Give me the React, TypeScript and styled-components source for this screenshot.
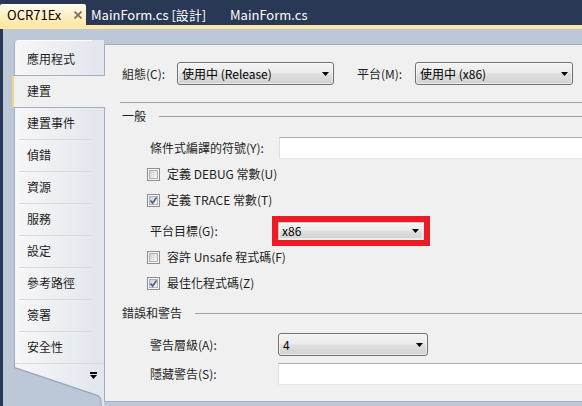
import styled, { createGlobalStyle } from 'styled-components';

const GlobalStyle = createGlobalStyle`
  html, body {
    margin: 0;
    padding: 0;
    width: 582px;
    height: 406px;
    overflow: hidden;
    background: #bcc7d8;
  }
  body {
    font-family: "Noto Sans CJK TC", "Liberation Sans", sans-serif;
    font-size: 12px;
    color: #1e1e1e;
  }
`;

const Window = styled.div`
  width: 582px;
  height: 406px;
  display: flex;
  flex-direction: column;
  overflow: hidden;
`;

const TabStrip = styled.div`
  height: 25px;
  flex-shrink: 0;
  display: flex;
  align-items: flex-end;
  background: #293955;
`;

const DocTab = styled.div<{ $active?: boolean; $w?: number }>`
  height: 21px;
  width: ${(p) => (p.$w ? `${p.$w}px` : 'auto')};
  box-sizing: border-box;
  display: flex;
  align-items: center;
  gap: 13px;
  padding-left: ${(p) => (p.$active ? 7 : 5)}px;
  font-size: 13px;
  line-height: 21px;
  white-space: nowrap;
  color: ${(p) => (p.$active ? '#000' : '#fff')};
  background: ${(p) => (p.$active ? 'linear-gradient(#fffbf0, #ffeec0 60%, #ffe8a6)' : 'transparent')};
  border-radius: 2px 2px 0 0;
`;

const CloseIcon = () => (
  <svg width="8" height="8" viewBox="0 0 8 8">
    <path d="M0.5 0.5 L7.5 7.5 M7.5 0.5 L0.5 7.5" stroke="#716c5e" strokeWidth="1.6" />
  </svg>
);

const YellowBar = styled.div`
  height: 4px;
  flex-shrink: 0;
  background: #ffe8a6;
`;

const Workspace = styled.div`
  flex: 1;
  display: flex;
  border-left: 3px solid #293955;
  padding: 11px 0 0 11px;
  background: #bcc7d8;
`;

const Nav = styled.div`
  width: 90px;
  flex-shrink: 0;
  display: flex;
  flex-direction: column;
  position: relative;
  z-index: 1;
`;

const NavItem = styled.div<{ $selected?: boolean; $first?: boolean; $edge?: 'strong' | 'faint' }>`
  position: relative;
  height: ${(p) => (p.$first ? 35 : 32)}px;
  box-sizing: border-box;
  display: flex;
  align-items: center;
  padding: ${(p) => (p.$first ? '3px 0 0 12px' : '0 0 0 12px')};
  border-left: 1px solid #a3aec0;
  border-radius: ${(p) => (p.$first ? '4px 0 0 0' : '0')};
  background: linear-gradient(90deg, #f7f7f8, #e1e5ec);
  color: #1e1e1e;
  line-height: 16px;

  &::before {
    content: '';
    position: absolute;
    top: 0;
    height: 1px;
    left: ${(p) => (p.$edge === 'strong' ? '-1px' : '4px')};
    right: ${(p) => (p.$edge === 'strong' ? '0' : '12px')};
    background: ${(p) =>
      p.$edge === 'strong' ? '#a3aec0' : p.$first ? '#ffffff' : '#d6dae2'};
  }

  ${(p) =>
    p.$selected &&
    `
    margin-left: -2px;
    margin-right: -1px;
    padding-left: 13px;
    border-left: 2px solid #f2d48c;
    border-radius: 0;
    background: #f0f0f0;
  `}
`;

const NavFooter = styled.div`
  position: relative;
  flex: 1;
  background: #98a5b8;
  clip-path: polygon(0 0, 100% 0, 100% 100%, 87px 100%, 86px 36px, 83px 33px, 0 5px);
`;

const NavFooterFill = styled.div`
  height: 100%;
  display: flex;
  justify-content: flex-end;
  padding: 8px 7px 0 0;
  box-sizing: border-box;
  background: linear-gradient(90deg, #f7f7f8, #e1e5ec);
  clip-path: polygon(1px 0, 100% 0, 100% 100%, 88px 100%, 87px 35px, 84px 32px, 1px 4px);
  border-top: 1px solid #d6dae2;
`;

const MoreIcon = () => (
  <svg width="7" height="7" viewBox="0 0 7 7">
    <rect x="0" y="0" width="7" height="2" fill="#000" />
    <polygon points="0,3 7,3 3.5,7" fill="#000" />
  </svg>
);

const Panel = styled.div`
  flex: 1;
  margin-top: 4px;
  height: 358px;
  box-sizing: border-box;
  border: 1px solid #a3aec0;
  border-right: none;
  background: #f0f0f0;
  padding: 17px 0 0 17px;
  display: flex;
  flex-direction: column;
`;

const Row = styled.div<{ $mt: number; $h: number; $indent?: number }>`
  display: flex;
  align-items: center;
  margin-top: ${(p) => p.$mt}px;
  height: ${(p) => p.$h}px;
  padding-left: ${(p) => p.$indent ?? 0}px;
  flex-shrink: 0;
`;

const Label = styled.span<{ $w?: number; $ml?: number }>`
  width: ${(p) => (p.$w ? `${p.$w}px` : 'auto')};
  margin-left: ${(p) => p.$ml ?? 0}px;
  flex-shrink: 0;
  white-space: nowrap;
  color: #1e1e1e;
  line-height: 16px;
`;

const Rule = styled.div<{ $mt: number }>`
  margin: ${(p) => p.$mt}px 0 0 -2px;
  height: 1px;
  background: #a0a0a0;
  flex-shrink: 0;
`;

const Heading = styled(Row)`
  &::after {
    content: '';
    flex: 1;
    height: 1px;
    margin-left: 13px;
    background: #a0a0a0;
  }
`;

const SelectBox = styled.div<{ $w: number; $framed?: boolean }>`
  width: ${(p) => p.$w}px;
  height: ${(p) => (p.$framed ? 18 : 23)}px;
  box-sizing: border-box;
  flex-shrink: 0;
  display: flex;
  align-items: center;
  justify-content: space-between;
  padding: 0 4px 0 ${(p) => (p.$framed ? 3 : 4)}px;
  border: 1px solid ${(p) => (p.$framed ? '#c4c4c4' : '#707070')};
  border-right-color: ${(p) => (p.$framed ? 'transparent' : '#707070')};
  border-bottom-color: ${(p) => (p.$framed ? 'transparent' : '#707070')};
  border-radius: ${(p) => (p.$framed ? 0 : 3)}px;
  background: linear-gradient(#f3f3f3 0%, #ebebeb 45%, #dedede 55%, #d2d2d2 100%);
  box-shadow: inset 0 0 0 1px rgba(255, 255, 255, 0.55);
  color: #000;
  line-height: 16px;
  white-space: nowrap;
`;

const RedFrame = styled.div`
  border: 6px solid #ed1c24;
  display: flex;
  flex-shrink: 0;
  margin-left: -6px;
`;

const ArrowIcon = () => (
  <svg width="7" height="4" viewBox="0 0 7 4">
    <polygon points="0,0 7,0 3.5,4" fill="#000" />
  </svg>
);

const Select = ({ w, value, framed }: { w: number; value: string; framed?: boolean }) => (
  <SelectBox $w={w} $framed={framed}>
    <span>{value}</span>
    <ArrowIcon />
  </SelectBox>
);

const TextBox = styled.div`
  flex: 1;
  height: 22px;
  box-sizing: border-box;
  margin-right: -3px;
  background: #fff;
  border: 1px solid #dbdfe6;
  border-top-color: #abadb3;
  border-bottom-color: #e3e9ef;
`;

const CheckBox = styled.span`
  width: 13px;
  height: 13px;
  box-sizing: border-box;
  flex-shrink: 0;
  display: flex;
  align-items: center;
  justify-content: center;
  border: 1px solid #8e8f8f;
  background: #f4f4f4;
  position: relative;

  &::before {
    content: '';
    position: absolute;
    inset: 1px;
    border: 1px solid #b0b4ba;
    background: linear-gradient(135deg, #cfd2d6, #f6f6f6);
  }

  svg {
    position: relative;
  }
`;

const CheckLabel = styled.span`
  margin-left: 7px;
  white-space: nowrap;
  line-height: 16px;
`;

const Check = ({ checked, label }: { checked?: boolean; label: string }) => (
  <Row $mt={0} $h={22}>
    <CheckBox>
      {checked && (
        <svg width="9" height="9" viewBox="0 0 9 9">
          <path d="M1.5 4.5 L3.6 7 L7.6 1.5" stroke="#4e6189" strokeWidth="1.7" fill="none" />
        </svg>
      )}
    </CheckBox>
    <CheckLabel>{label}</CheckLabel>
  </Row>
);

const CheckRow = styled.div<{ $mt: number }>`
  margin-top: ${(p) => p.$mt}px;
  padding-left: 25px;
  flex-shrink: 0;
`;

const navItems = ['建置事件', '偵錯', '資源', '服務', '設定', '參考路徑', '簽署', '安全性'];

export default function App() {
  return (
    <Window>
      <GlobalStyle />
      <TabStrip>
        <DocTab $active $w={86}>
          OCR71Ex
          <CloseIcon />
        </DocTab>
        <DocTab $w={139}>MainForm.cs [設計]</DocTab>
        <DocTab>MainForm.cs</DocTab>
      </TabStrip>
      <YellowBar />
      <Workspace>
        <Nav>
          <NavItem $first>應用程式</NavItem>
          <NavItem $selected $edge="strong">
            建置
          </NavItem>
          {navItems.map((item, i) => (
            <NavItem key={item} $edge={i === 0 ? 'strong' : 'faint'}>
              {item}
            </NavItem>
          ))}
          <NavFooter>
            <NavFooterFill>
              <MoreIcon />
            </NavFooterFill>
          </NavFooter>
        </Nav>

        <Panel>
          <Row $mt={0} $h={23}>
            <Label $w={55}>組態(C):</Label>
            <Select w={157} value="使用中 (Release)" />
            <Label $w={58} $ml={23}>
              平台(M):
            </Label>
            <Select w={158} value="使用中 (x86)" />
          </Row>

          <Rule $mt={17} />

          <Heading $mt={4} $h={18}>
            <Label>一般</Label>
          </Heading>

          <Row $mt={12} $h={21} $indent={28}>
            <Label $w={129}>條件式編譯的符號(Y):</Label>
            <TextBox />
          </Row>

          <CheckRow $mt={5}>
            <Check label="定義 DEBUG 常數(U)" />
          </CheckRow>
          <CheckRow $mt={4}>
            <Check checked label="定義 TRACE 常數(T)" />
          </CheckRow>

          <Row $mt={5} $h={30} $indent={28}>
            <Label $w={128}>平台目標(G):</Label>
            <RedFrame>
              <Select framed w={146} value="x86" />
            </RedFrame>
          </Row>

          <CheckRow $mt={0}>
            <Check label="容許 Unsafe 程式碼(F)" />
          </CheckRow>
          <CheckRow $mt={4}>
            <Check checked label="最佳化程式碼(Z)" />
          </CheckRow>

          <Heading $mt={10} $h={18}>
            <Label>錯誤和警告</Label>
          </Heading>

          <Row $mt={11} $h={23} $indent={28}>
            <Label $w={128}>警告層級(A):</Label>
            <Select w={150} value="4" />
          </Row>

          <Row $mt={7} $h={22} $indent={28}>
            <Label $w={128}>隱藏警告(S):</Label>
            <TextBox />
          </Row>
        </Panel>
      </Workspace>
    </Window>
  );
}
